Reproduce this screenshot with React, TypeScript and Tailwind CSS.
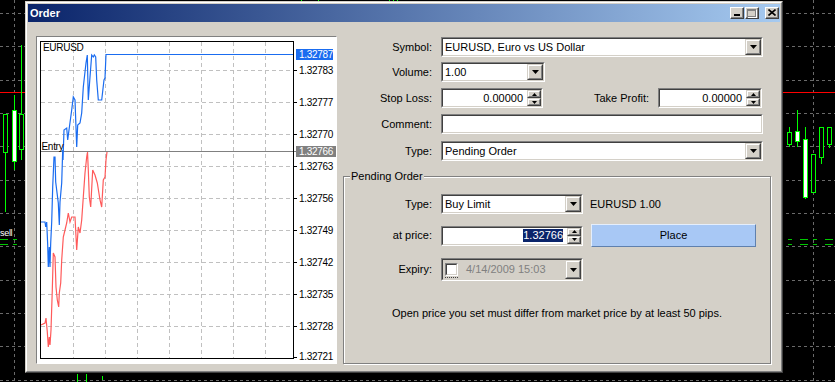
import React from 'react';

type Pt = [number, number];

const BLUE: Pt[] = [
  [41, 222], [45, 222], [45.7, 227], [46.7, 222], [47.7, 245], [48.3, 267], [49.3, 247], [50, 267],
  [50.7, 243], [51.7, 222], [52.7, 187], [54, 157], [55, 157], [55.7, 182], [58.3, 203], [59.3, 225],
  [60, 202], [61.7, 183], [62.7, 150], [63, 160], [64, 130], [66.7, 128], [67.7, 140], [69, 130],
  [71.7, 110], [73.3, 97], [75, 100], [76.7, 147], [77.7, 125], [80, 123], [81.7, 113], [83.3, 87],
  [86, 63], [87.3, 55], [88.3, 100], [90, 77], [91.7, 55], [93.3, 57], [94.3, 55], [95.7, 57],
  [96.7, 80], [98.3, 100], [101.7, 100], [104, 80], [105, 78], [106, 54.5], [293, 54.5],
];

const RED: Pt[] = [
  [41, 325], [45, 323], [46, 318], [47.3, 332], [48.3, 347], [49.3, 337], [50, 345], [51, 330],
  [52.3, 290], [53.3, 253], [55, 257], [56, 287], [57.3, 300], [58.7, 307], [59.3, 293], [60.7, 283],
  [61.7, 260], [63.3, 237], [65, 230], [66.7, 223], [68.3, 213], [70, 222], [71.7, 217], [75, 217],
  [76.7, 250], [78.3, 227], [80, 233], [81.7, 220], [83.3, 197], [85, 173], [86.7, 157], [87.5, 152],
  [88.3, 170], [89.3, 197], [90.7, 207], [92.7, 170], [95, 175], [97.3, 183], [100, 200], [101.7, 207],
  [103.3, 180], [105, 177], [106, 160], [107, 152],
];

const PRICES: { y: number; t: string }[] = [
  { y: 70.5, t: '1.32783' },
  { y: 102.5, t: '1.32777' },
  { y: 134.5, t: '1.32770' },
  { y: 166.5, t: '1.32763' },
  { y: 198.5, t: '1.32756' },
  { y: 230.5, t: '1.32749' },
  { y: 262.5, t: '1.32742' },
  { y: 294.5, t: '1.32735' },
  { y: 326.5, t: '1.32728' },
  { y: 356.5, t: '1.32721' },
];

const toPts = (p: Pt[]) => p.map(([x, y]) => `${x},${y}`).join(' ');

function Candle({ x, w = 4, top, bottom, wt, wb, white }: { x: number; w?: number; top: number; bottom: number; wt: number; wb: number; white?: boolean }) {
  const cx = x + w / 2;
  return (
    <g>
      <line x1={cx} x2={cx} y1={wt} y2={wb} stroke="#00ff00" />
      <rect x={x} y={top} width={w} height={bottom - top} fill={white ? '#fff' : '#000'} stroke="#00ff00" />
    </g>
  );
}

function Backdrop() {
  const hy = [13, 46, 80, 113, 146, 180, 213, 246, 280, 313, 346, 380];
  return (
    <svg className="absolute inset-0" width="835" height="382">
      {hy.map(y => (
        <line key={y} x1="0" x2="835" y1={y + 0.5} y2={y + 0.5} stroke="#6a6a6a" strokeDasharray="3 3" />
      ))}
      <line x1="14.5" x2="14.5" y1="0" y2="382" stroke="#6a6a6a" strokeDasharray="3 3" />
      <line x1="813.5" x2="813.5" y1="0" y2="382" stroke="#6a6a6a" strokeDasharray="3 3" />
      <line x1="0" x2="835" y1="92.5" y2="92.5" stroke="#ff0000" />
      <line x1="0" x2="835" y1="239.5" y2="239.5" stroke="#00c800" strokeDasharray="8 5 4 8" />
      <line x1="0" x2="835" y1="244.5" y2="244.5" stroke="#00c800" strokeDasharray="8 5 4 8" />

      {/* left candles */}
      <Candle x={3.5} top={114.5} bottom={152.5} wt={114} wb={212} />
      <Candle x={12.5} top={110.5} bottom={161.5} wt={95} wb={170} white />
      <Candle x={19.5} top={114.5} bottom={149.5} wt={45} wb={160} />

      {/* right candles */}
      <Candle x={787.5} top={132.5} bottom={144.5} wt={127} wb={147} />
      <Candle x={795.5} top={131.5} bottom={141.5} wt={110} wb={147} white />
      <Candle x={803.5} top={139.5} bottom={197.5} wt={127} wb={199} white />
      <Candle x={811.5} top={154.5} bottom={192.5} wt={154} wb={192} />
      <Candle x={819.5} top={127.5} bottom={157.5} wt={127} wb={164} />
      <Candle x={827.5} top={127.5} bottom={144.5} wt={127} wb={148} />

      <text x="0" y="236" fill="#fff" fontFamily="Liberation Sans, sans-serif" fontSize="9" letterSpacing="-0.3">sell</text>

      {/* bits peeking out around the window */}
      <line x1="77.5" x2="77.5" y1="374" y2="382" stroke="#00ff00" />
      <line x1="86.5" x2="86.5" y1="374" y2="382" stroke="#00ff00" />
      <line x1="102.5" x2="102.5" y1="376" y2="380" stroke="#00ff00" />
      <line x1="301.5" x2="301.5" y1="0" y2="2" stroke="#00ff00" />
      <line x1="318.5" x2="318.5" y1="0" y2="2" stroke="#00ff00" />
      <line x1="389.5" x2="389.5" y1="0" y2="3" stroke="#00ff00" />
      <line x1="393.5" x2="393.5" y1="0" y2="3" stroke="#00ff00" />
      <line x1="397.5" x2="397.5" y1="0" y2="2" stroke="#00ff00" />
    </svg>
  );
}

function CaptionBtn({ children, className = '' }: { children?: React.ReactNode; className?: string }) {
  return (
    <div className={`h-[12px] w-[14px] border border-t-white border-l-white border-r-[#404040] border-b-[#404040] bg-[#d4d0c8] ${className}`}>
      <div className="flex h-full items-center justify-center border-r border-b border-[#808080]">{children}</div>
    </div>
  );
}

function TitleBar() {
  return (
    <div className="flex h-[18px] items-center bg-[linear-gradient(to_right,#0a246a,#a6caf0)] pl-[2px] pr-px">
      <span className="flex-1 text-[11px] font-bold text-white">Order</span>
      <CaptionBtn>
        <div className="mt-[5px] h-[2px] w-[6px] bg-black" />
      </CaptionBtn>
      <CaptionBtn className="ml-px">
        <div className="h-[8px] w-[9px] border border-t-2 border-[#808080] shadow-[1px_1px_0_#fff]" />
      </CaptionBtn>
      <CaptionBtn className="ml-[6px]">
        <svg width="8" height="7" viewBox="0 0 8 7">
          <path d="M0.5 0.5L7.5 6.5M7.5 0.5L0.5 6.5" stroke="#000" strokeWidth="1.6" />
        </svg>
      </CaptionBtn>
    </div>
  );
}

function ChartPanel() {
  const vx = [73.5, 105.5, 137.5, 169.5, 201.5, 233.5, 265.5];
  const hy = [70.5, 102.5, 134.5, 166.5, 198.5, 230.5, 262.5, 294.5, 326.5];
  return (
    <div className="h-[328px] w-[301px] border border-t-[#808080] border-l-[#808080] border-r-white border-b-white bg-white">
      <svg width="299" height="326" viewBox="37 37 299 326" className="block" fontFamily="Liberation Sans, Arial, sans-serif" fontSize="10" letterSpacing="-0.3">
        {hy.map(y => (
          <line key={y} x1="41" x2="293" y1={y} y2={y} stroke="#c0c0c0" strokeDasharray="4 3" />
        ))}
        {vx.map(x => (
          <line key={x} x1={x} x2={x} y1="42" y2="358" stroke="#c0c0c0" strokeDasharray="4 3" />
        ))}
        <line x1="41" x2="296" y1="151.5" y2="151.5" stroke="#808080" />
        <polyline points={toPts(RED)} fill="none" stroke="#ff5a5a" strokeWidth="1.2" />
        <polyline points={toPts(BLUE)} fill="none" stroke="#1a6cf0" strokeWidth="1.2" />
        <rect x="40.5" y="41.5" width="253" height="317" fill="none" stroke="#000" />
        {hy.map(y => (
          <line key={y} x1="293" x2="297" y1={y} y2={y} stroke="#000" />
        ))}
        <line x1="293" x2="297" y1="357.5" y2="357.5" stroke="#000" />
        {PRICES.map(p => (
          <text key={p.t} x="299" y={p.y + 3.5} fill="#000">{p.t}</text>
        ))}
        <rect x="296" y="49" width="37" height="11" fill="#1a6cf0" />
        <text x="299" y="58" fill="#fff">1.32787</text>
        <rect x="296" y="146" width="40" height="11" fill="#808080" />
        <text x="299" y="155" fill="#fff">1.32766</text>
        <text x="43" y="51" fill="#000">EURUSD</text>
        <text x="41.5" y="150" fill="#000">Entry</text>
      </svg>
    </div>
  );
}

function Sunken({ className = '', inner = 'bg-white', children }: { className?: string; inner?: string; children?: React.ReactNode }) {
  return (
    <div className={`border border-t-[#808080] border-l-[#808080] border-r-white border-b-white ${className}`}>
      <div className={`flex h-full items-stretch border border-t-[#404040] border-l-[#404040] border-r-[#d4d0c8] border-b-[#d4d0c8] ${inner}`}>
        {children}
      </div>
    </div>
  );
}

function Raised({ className = '', children }: { className?: string; children?: React.ReactNode }) {
  return (
    <div className={`border border-t-[#d4d0c8] border-l-[#d4d0c8] border-r-[#404040] border-b-[#404040] bg-[#d4d0c8] ${className}`}>
      <div className="flex h-full items-center justify-center border border-t-white border-l-white border-r-[#808080] border-b-[#808080]">
        {children}
      </div>
    </div>
  );
}

function DownArrow() {
  return (
    <svg width="7" height="4" viewBox="0 0 7 4">
      <path d="M0 0H7L3.5 4Z" fill="#000" />
    </svg>
  );
}

function Combo({ w, text }: { w: string; text: string }) {
  return (
    <Sunken className={`h-[20px] ${w}`}>
      <span className="flex-1 self-center truncate pl-[2px]">{text}</span>
      <Raised className="w-[16px]">
        <DownArrow />
      </Raised>
    </Sunken>
  );
}

function Spin() {
  return (
    <div className="flex w-[14px] flex-col">
      <Raised className="flex-1">
        <svg width="5" height="3" viewBox="0 0 5 3">
          <path d="M2.5 0L5 3H0Z" fill="#000" />
        </svg>
      </Raised>
      <Raised className="flex-1">
        <svg width="5" height="3" viewBox="0 0 5 3">
          <path d="M0 0H5L2.5 3Z" fill="#000" />
        </svg>
      </Raised>
    </div>
  );
}

function SpinEdit({ w, value }: { w: string; value: string }) {
  return (
    <Sunken className={`h-[20px] ${w}`}>
      <span className="flex-1 self-center pr-[4px] text-right">{value}</span>
      <Spin />
    </Sunken>
  );
}

function Row({ label, className = '', lw = 'w-[89px]', h = 'h-[20px]', children }: { label: string; className?: string; lw?: string; h?: string; children?: React.ReactNode }) {
  return (
    <div className={`flex items-center ${h} ${className}`}>
      <span className={`${lw} text-right`}>{label}</span>
      <div className="ml-[9px] flex items-center">{children}</div>
    </div>
  );
}

function PendingGroup() {
  return (
    <div className="relative mt-[15px] h-[188px] w-[428px] border border-[#808080] shadow-[inset_1px_1px_0_#fff,1px_1px_0_#fff]">
      <span className="absolute left-[6px] top-[-7px] bg-[#d4d0c8] px-px leading-[13px]">Pending Order</span>
      <div className="flex flex-col pt-[17px]">
        <Row label="Type:" lw="w-[88px]">
          <Combo w="w-[142px]" text="Buy Limit" />
          <span className="ml-[7px]">EURUSD 1.00</span>
        </Row>
        <Row label="at price:" lw="w-[88px]" h="h-[23px]" className="mt-[10px]">
          <Sunken className="h-[20px] w-[142px]">
            <span className="flex flex-1 items-center justify-end pr-[4px]">
              <span className="bg-[#0a246a] leading-[13px] text-white">1.32766</span>
            </span>
            <Spin />
          </Sunken>
          <div className="ml-[8px] flex h-[23px] w-[165px] items-center justify-center border border-t-[#e4eefc] border-l-[#e4eefc] border-r-[#5f80ae] border-b-[#5f80ae] bg-[#a8c8f5]">
            Place
          </div>
        </Row>
        <Row label="Expiry:" lw="w-[88px]" h="h-[23px]" className="mt-[11px]">
          <Sunken className="h-[23px] w-[142px]" inner="bg-[#d4d0c8]">
            <div className="ml-[2px] flex flex-col justify-center">
              <div className="mt-[2px] h-[13px] w-[13px] border border-t-[#808080] border-l-[#808080] border-r-white border-b-white">
                <div className="h-full border border-t-[#404040] border-l-[#404040] border-r-[#d4d0c8] border-b-[#d4d0c8] bg-white" />
              </div>
              <div className="mt-px w-[13px] border-t border-dotted border-[#404040]" />
            </div>
            <span className="ml-[8px] flex-1 self-center text-[#808080]">4/14/2009 15:03</span>
            <Raised className="w-[16px]">
              <DownArrow />
            </Raised>
          </Sunken>
        </Row>
        <p className="mt-[26px] h-[13px] text-center leading-[13px]">
          Open price you set must differ from market price by at least 50 pips.
        </p>
      </div>
    </div>
  );
}

function OrderForm() {
  return (
    <div className="ml-[6px] flex w-[428px] flex-col pt-px">
      <Row label="Symbol:">
        <Combo w="w-[322px]" text="EURUSD, Euro vs US Dollar" />
      </Row>
      <Row label="Volume:" className="mt-[5px]">
        <Combo w="w-[104px]" text="1.00" />
      </Row>
      <Row label="Stop Loss:" className="mt-[6px]">
        <SpinEdit w="w-[102px]" value="0.00000" />
        <span className="w-[106px] text-right">Take Profit:</span>
        <div className="ml-[9px]">
          <SpinEdit w="w-[104px]" value="0.00000" />
        </div>
      </Row>
      <Row label="Comment:" className="mt-[6px]">
        <Sunken className="h-[20px] w-[322px]" />
      </Row>
      <Row label="Type:" className="mt-[7px]">
        <Combo w="w-[322px]" text="Pending Order" />
      </Row>
      <PendingGroup />
    </div>
  );
}

export default function App() {
  return (
    <div className="relative h-[382px] w-[835px] overflow-hidden bg-black font-['Liberation_Sans',Arial,sans-serif] text-[11px] text-black">
      <Backdrop />
      {/* the dialog window floating over the chart */}
      <div className="absolute left-[25px] top-[1px] h-[372px] w-[758px] border border-t-[#d4d0c8] border-l-[#d4d0c8] border-r-[#404040] border-b-[#404040] bg-[#d4d0c8]">
        <div className="flex h-full flex-col border border-t-white border-l-white border-r-[#808080] border-b-[#808080] p-px">
          <TitleBar />
          <div className="flex pl-[8px] pt-[14px]">
            <ChartPanel />
            <OrderForm />
          </div>
        </div>
      </div>
    </div>
  );
}
